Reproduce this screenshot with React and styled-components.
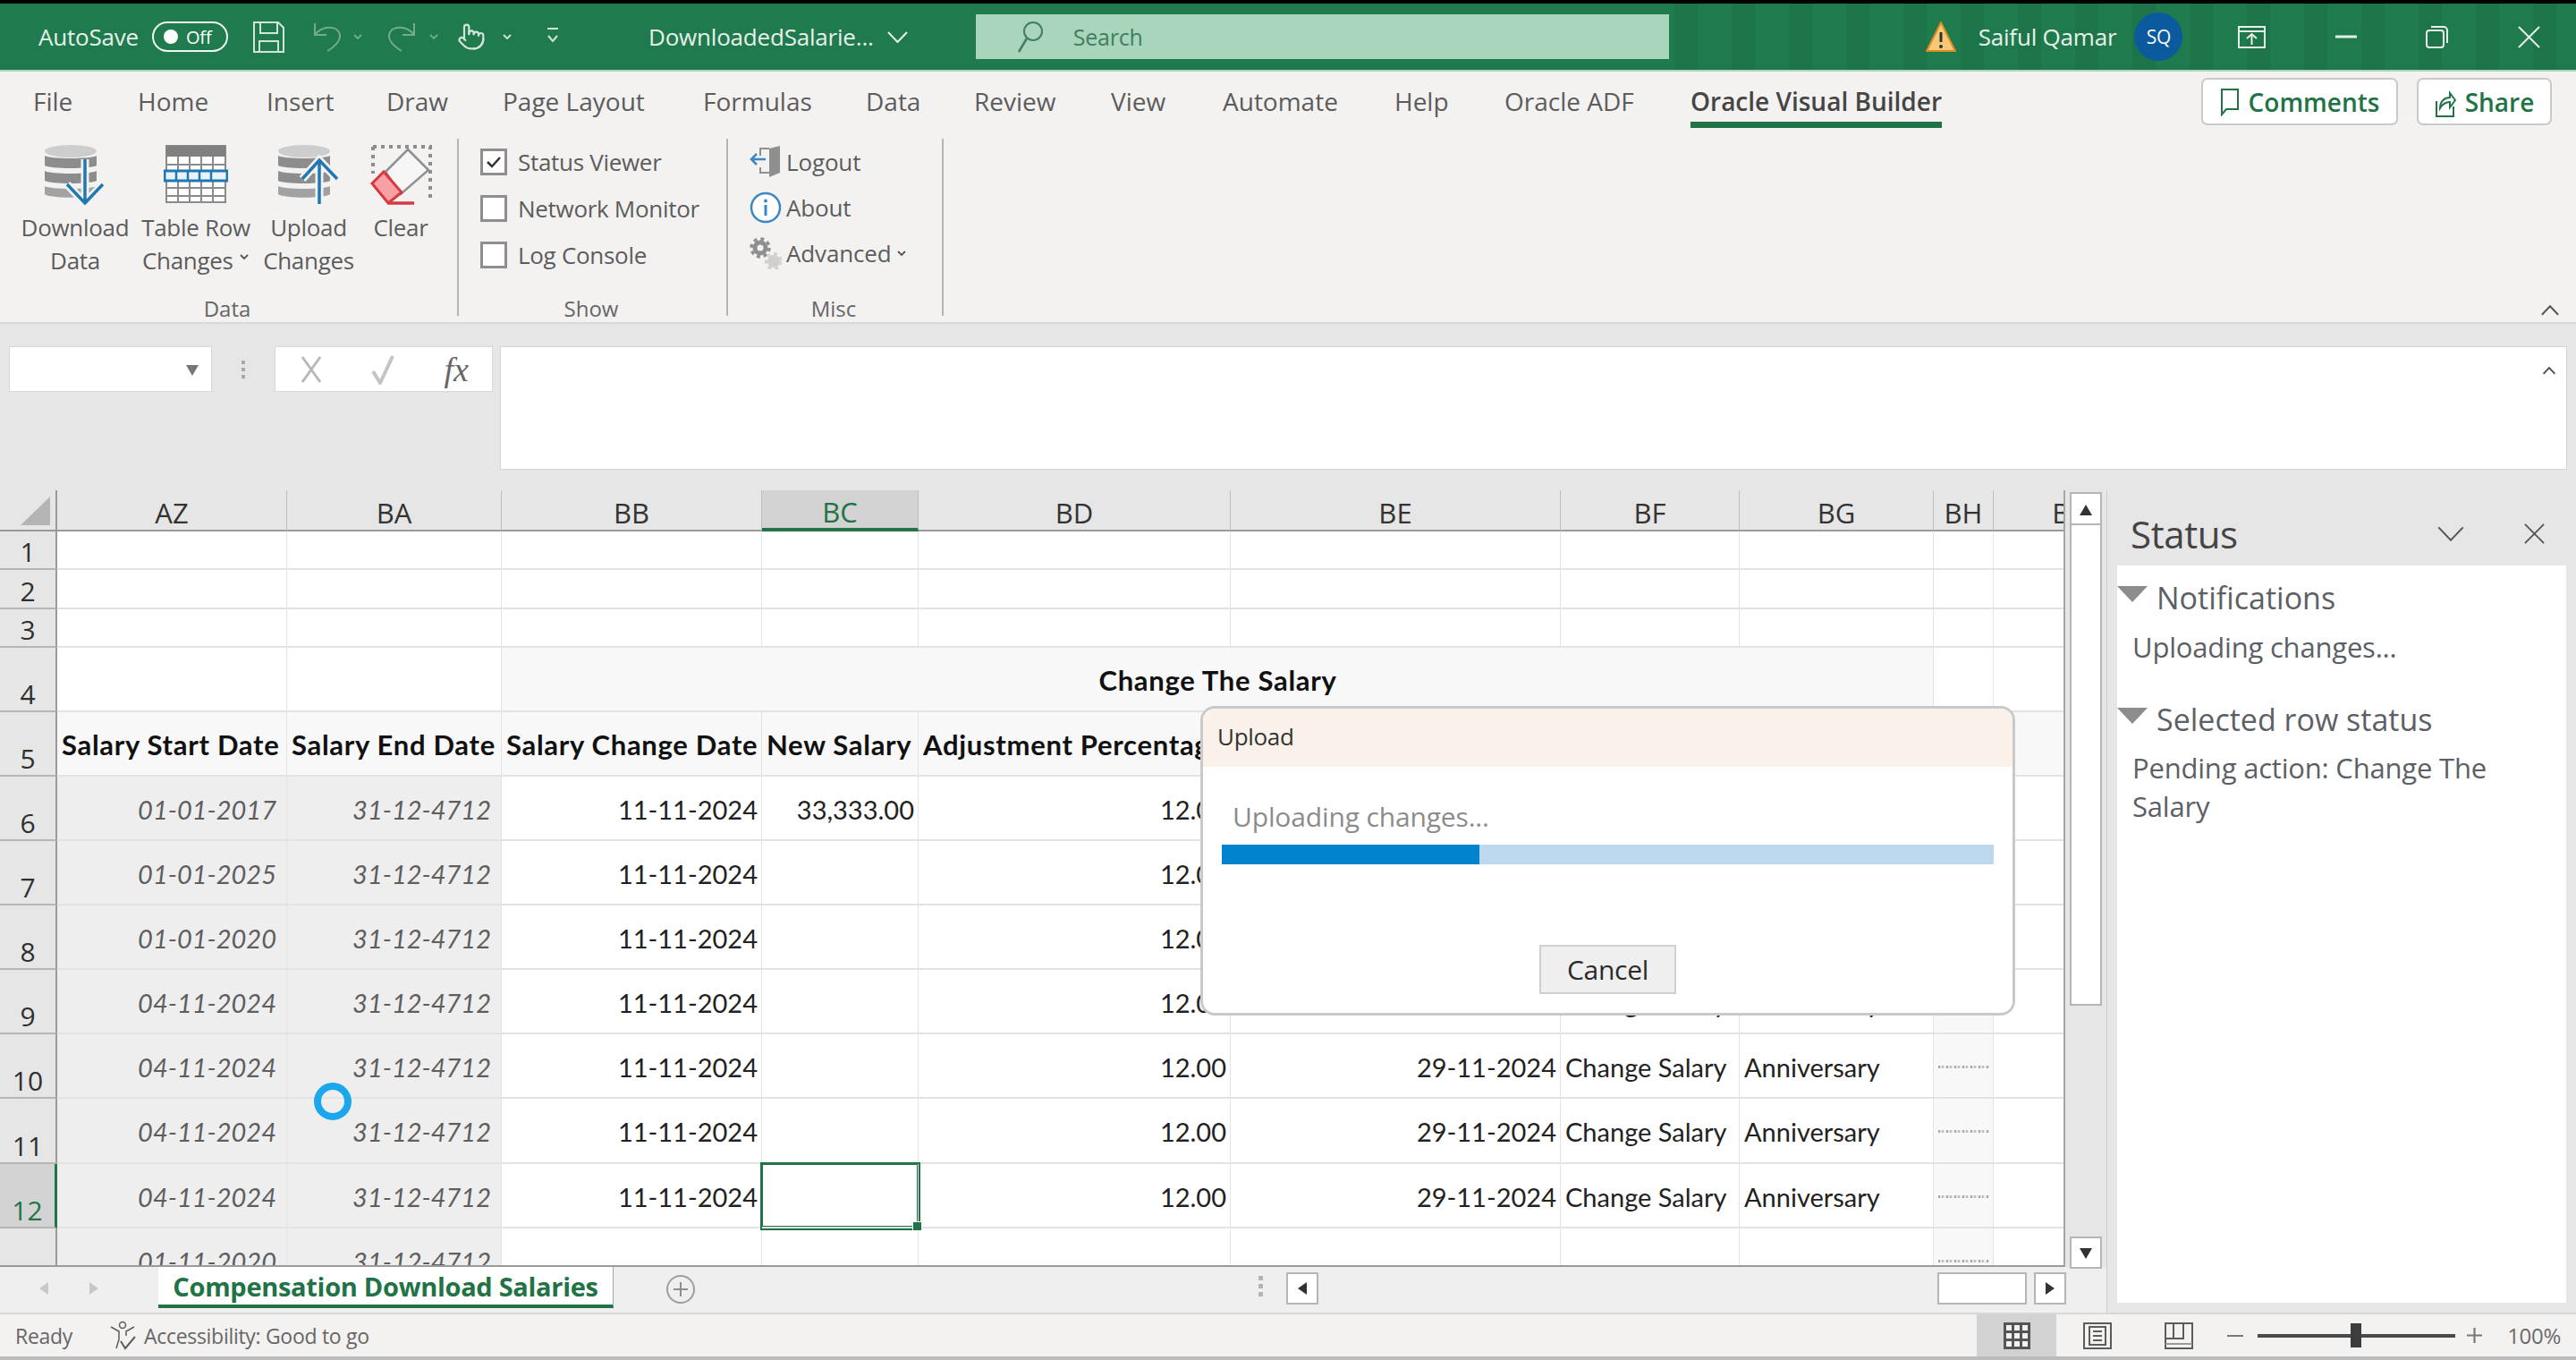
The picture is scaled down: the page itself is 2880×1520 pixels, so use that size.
import React from "react";
import styled, { createGlobalStyle } from "styled-components";
import { Pointer } from "lucide-react";

const GlobalStyle = createGlobalStyle`
  html, body {
    margin: 0;
    padding: 0;
    background: #000;
  }
  * {
    box-sizing: border-box;
  }
`;

const UI_FONT = `"Open Sans", "Noto Sans", sans-serif`;
const CELL_FONT = `Lato, "Open Sans", sans-serif`;
const GREEN = "#217346";

const Page = styled.div`
  width: 2880px;
  height: 1520px;
  display: flex;
  flex-direction: column;
  overflow: hidden;
  border-top: 4px solid #000;
  background: #e6e6e6;
  font-family: ${UI_FONT};
`;

/* title bar */
const TitleBar = styled.header`
  height: 76px;
  flex: none;
  display: flex;
  align-items: center;
  padding-left: 43px;
  color: #e6f1ea;
  font-size: 26px;
  letter-spacing: -0.2px;
  border-bottom: 2px solid #a9d6bc;
  background:
    repeating-linear-gradient(90deg, rgba(0, 0, 0, 0.05) 0 26px, transparent 26px 64px) right / 1008px 100% no-repeat,
    #1f7a4d;
`;

const Slot = styled.span`
  display: inline-flex;
  align-items: center;
  flex: none;
  margin-left: ${(p) => p.$gap || 0}px;
  white-space: nowrap;
`;

const Toggle = styled.span`
  width: 85px;
  height: 34px;
  margin-left: 15px;
  flex: none;
  display: flex;
  align-items: center;
  gap: 9px;
  padding-left: 11px;
  border: 2px solid #eef6f1;
  border-radius: 17px;
  font-size: 20px;
  color: #fff;
  &::before {
    content: "";
    width: 16px;
    height: 16px;
    border-radius: 50%;
    background: #fff;
  }
`;

const SearchBox = styled.div`
  width: 775px;
  height: 50px;
  margin-left: 76px;
  flex: none;
  display: flex;
  align-items: center;
  gap: 33px;
  padding-left: 46px;
  background: #a8d5bb;
  color: #3f7f5f;
  font-size: 25px;
`;

const Avatar = styled.span`
  width: 54px;
  height: 54px;
  margin-left: 20px;
  flex: none;
  display: flex;
  align-items: center;
  justify-content: center;
  border-radius: 50%;
  background: #0b5a9e;
  color: #fff;
  font-size: 21px;
`;

/* ribbon */
const Ribbon = styled.section`
  height: 282px;
  flex: none;
  display: flex;
  flex-direction: column;
  background: #f3f2f1;
  border-bottom: 2px solid #dad9d8;
  color: #5c5c5c;
`;

const TabRow = styled.nav`
  height: 66px;
  flex: none;
  display: flex;
  align-items: flex-start;
  padding: 0 27px 0 37px;
`;

const MenuTab = styled.span`
  width: ${(p) => (p.$width ? `${p.$width}px` : "auto")};
  height: 63px;
  flex: none;
  display: flex;
  align-items: center;
  padding-top: 10px;
  font-size: 28px;
  font-weight: ${(p) => (p.$active ? 600 : 400)};
  color: ${(p) => (p.$active ? "#454545" : "#5c5c5c")};
  border-bottom: ${(p) => (p.$active ? `7px solid ${GREEN}` : "7px solid transparent")};
`;

const TabActions = styled.div`
  margin-left: auto;
  margin-top: 7px;
  display: flex;
  gap: 21px;
`;

const ActionButton = styled.button`
  width: ${(p) => p.$width}px;
  height: 53px;
  display: flex;
  align-items: center;
  justify-content: center;
  gap: 10px;
  padding: 0;
  border: 2px solid #c9c9c9;
  border-radius: 7px;
  background: #fff;
  color: ${GREEN};
  font-family: inherit;
  font-size: 28px;
  font-weight: 600;
`;

const Tools = styled.div`
  height: 198px;
  margin-top: 9px;
  flex: none;
  display: flex;
`;

const Group = styled.div`
  width: ${(p) => p.$width}px;
  height: 100%;
  flex: none;
  display: flex;
  flex-direction: column;
  border-right: 2px solid #b5b5b5;
  padding-left: ${(p) => p.$pad || 0}px;
`;

const GroupLabel = styled.div`
  margin-top: auto;
  margin-left: ${(p) => -(p.$pad || 0)}px;
  padding-right: 3px;
  height: 16px;
  line-height: 16px;
  text-align: center;
  font-size: 24px;
  color: #666;
`;

const BigButtons = styled.div`
  display: grid;
  grid-template-columns: 124px 146px 106px 100px;
`;

const BigButton = styled.div`
  display: flex;
  flex-direction: column;
  align-items: center;
  padding-top: 7px;
  font-size: 26px;
  line-height: 37px;
  letter-spacing: -0.3px;
  white-space: nowrap;
  text-align: center;
  svg {
    margin-bottom: 8px;
    flex: none;
  }
`;

const IconWrap = styled.div`
  height: 74px;
`;

const CheckRow = styled.div`
  height: 52px;
  display: flex;
  align-items: center;
  gap: 12px;
  font-size: 26px;
  letter-spacing: -0.3px;
  white-space: nowrap;
`;

const CheckBox = styled.span`
  width: 30px;
  height: 30px;
  flex: none;
  display: flex;
  align-items: center;
  justify-content: center;
  background: #fff;
  border: 3px solid #8e8e8e;
`;

const MiscRow = styled.div`
  height: 51px;
  display: flex;
  align-items: center;
  gap: 5px;
  font-size: 26px;
  letter-spacing: -0.15px;
  white-space: nowrap;
`;

const Collapse = styled.span`
  margin: auto 19px 0 auto;
  display: flex;
`;

/* formula bar */
const FormulaBar = styled.section`
  height: 186px;
  flex: none;
  display: flex;
  align-items: flex-start;
  padding: 25px 10px 0 10px;
  background: #e6e6e6;
`;

const NameBox = styled.div`
  width: 227px;
  height: 51px;
  flex: none;
  display: flex;
  align-items: center;
  justify-content: flex-end;
  padding-right: 14px;
  background: #fff;
  border: 1px solid #d8d8d8;
`;

const Grip = styled.span`
  width: 70px;
  height: 51px;
  flex: none;
  display: flex;
  flex-direction: column;
  align-items: center;
  justify-content: center;
  gap: 4px;
  i {
    width: 4px;
    height: 4px;
    background: #a8a8a8;
  }
`;

const FxBox = styled.div`
  width: 244px;
  height: 51px;
  flex: none;
  display: flex;
  align-items: center;
  justify-content: space-between;
  padding: 0 26px 0 28px;
  background: #fff;
  border: 1px solid #d8d8d8;
`;

const FxMark = styled.span`
  font-family: "Liberation Serif", serif;
  font-style: italic;
  font-size: 38px;
  color: #666;
`;

const FormulaInput = styled.div`
  flex: 1;
  height: 138px;
  margin-left: 8px;
  display: flex;
  justify-content: flex-end;
  padding: 22px 12px 0 0;
  background: #fff;
  border: 1px solid #d4d4d4;
  align-items: flex-start;
`;

/* workspace */
const Workspace = styled.main`
  height: 919px;
  flex: none;
  display: flex;
`;

const SheetColumn = styled.div`
  width: 2356px;
  flex: none;
  display: flex;
  flex-direction: column;
  border-right: 1px solid #cfcfcf;
`;

const SheetBody = styled.div`
  position: relative;
  height: 868px;
  flex: none;
  display: flex;
`;

const GridClip = styled.div`
  width: 2309px;
  height: 868px;
  flex: none;
  overflow: hidden;
  border-bottom: 2px solid #9a9a9a;
  border-right: 2px solid #a5a5a5;
`;

const Grid = styled.div`
  width: 2389px;
  display: grid;
  grid-template-columns: 64px 257px 240px 291px 175px 349px 369px 200px 217px 67px 160px;
  grid-template-rows: 46px 43px 44px 43px 72px 72px 72px 72px 72px 72px 72px 73px 72px 72px;
  font-family: ${CELL_FONT};
`;

const Corner = styled.div`
  display: flex;
  align-items: flex-end;
  justify-content: flex-end;
  padding: 0 6px 5px 0;
  background: #e6e6e6;
  border-right: 2px solid #9a9a9a;
  border-bottom: 2px solid #9a9a9a;
  &::before {
    content: "";
    width: 33px;
    height: 32px;
    background: #b4b4b4;
    clip-path: polygon(100% 0, 100% 100%, 0 100%);
  }
`;

const ColHead = styled.div`
  display: flex;
  align-items: center;
  justify-content: center;
  padding-top: 6px;
  font-family: ${UI_FONT};
  font-size: 31px;
  color: ${(p) => (p.$active ? GREEN : "#333")};
  background: ${(p) => (p.$active ? "#d3d3d3" : "#e6e6e6")};
  border-right: 1px solid #bdbdbd;
  border-bottom: ${(p) => (p.$active ? `4px solid ${GREEN}` : "2px solid #9a9a9a")};
`;

const RowHead = styled.div`
  display: flex;
  align-items: flex-end;
  justify-content: center;
  padding-bottom: 1px;
  font-family: ${UI_FONT};
  font-size: 30px;
  line-height: 34px;
  color: ${(p) => (p.$active ? GREEN : "#2f2f2f")};
  background: ${(p) => (p.$active ? "#d3d3d3" : "#e6e6e6")};
  border-bottom: 2px solid #b5b5b5;
  border-right: ${(p) => (p.$active ? `3px solid ${GREEN}` : "2px solid #9a9a9a")};
`;

const toneColors = { plain: "#fff", soft: "#f8f8f8", muted: "#eeeeee" };

const Cell = styled.div`
  position: relative;
  display: flex;
  align-items: center;
  justify-content: ${(p) => p.$justify || "flex-end"};
  padding: 2px ${(p) => (p.$muted ? 11 : 4)}px 0 5px;
  font-size: ${(p) => (p.$bold ? "31px" : "29px")};
  letter-spacing: ${(p) => (p.$bold ? "0.7px" : "0")};
  font-weight: ${(p) => (p.$bold ? 700 : 400)};
  font-style: ${(p) => (p.$muted ? "italic" : "normal")};
  color: ${(p) => (p.$muted ? "#5e5e5e" : p.$bold ? "#111" : "#222")};
  white-space: nowrap;
  background: ${(p) => toneColors[p.$tone || "plain"]};
  border-right: 1px solid #e3e3e3;
  border-bottom: 2px solid #e3e3e3;
  ${(p) => p.$span && `grid-column: span ${p.$span};`}
  ${(p) =>
    p.$selected &&
    `
    box-shadow: 0 0 0 2px ${GREEN}, inset 0 0 0 1px ${GREEN};
    z-index: 1;
    &::after {
      content: "";
      position: absolute;
      right: -5px;
      bottom: -5px;
      width: 9px;
      height: 9px;
      background: ${GREEN};
      border: 1px solid #fff;
    }
  `}
`;

const TinyMark = styled.span`
  width: 60px;
  height: 3px;
  background: repeating-linear-gradient(90deg, #a8a8a8 0 2px, #e6e6e6 2px 4px, #bdbdbd 4px 6px, #ececec 6px 9px);
`;

const VScroll = styled.div`
  width: 46px;
  flex: none;
  display: flex;
  flex-direction: column;
  padding: 2px 5px 0;
  margin-bottom: -2px;
`;

const ScrollBtn = styled.div`
  width: ${(p) => p.$w || 36}px;
  height: ${(p) => p.$h || 36}px;
  flex: none;
  display: flex;
  align-items: center;
  justify-content: center;
  background: #fff;
  border: 2px solid #b5b5b5;
  ${(p) => p.$push && "margin-top: auto;"}
`;

const VThumb = styled.div`
  width: 36px;
  height: 537px;
  flex: none;
  background: #fff;
  border: 2px solid #b5b5b5;
  border-top: none;
`;

const Spinner = styled.div`
  position: absolute;
  left: 351px;
  top: 662px;
  width: 42px;
  height: 42px;
  border: 8px solid #1aa7ee;
  border-radius: 50%;
  z-index: 4;
`;

const Dialog = styled.div`
  position: absolute;
  left: 1342px;
  top: 241px;
  width: 911px;
  height: 346px;
  display: flex;
  flex-direction: column;
  background: #fff;
  border: 3px solid #c9c9c9;
  border-radius: 16px;
  overflow: hidden;
  z-index: 3;
`;

const DialogTitle = styled.div`
  height: 65px;
  flex: none;
  display: flex;
  align-items: center;
  padding: 0 0 3px 16px;
  background: #faf2ea;
  font-size: 26px;
  letter-spacing: -0.3px;
  color: #333;
`;

const DialogBody = styled.div`
  flex: 1;
  display: flex;
  flex-direction: column;
  padding: 35px 21px 21px;
`;

const DialogText = styled.div`
  padding-left: 12px;
  font-size: 30px;
  line-height: 42px;
  letter-spacing: -0.15px;
  color: #8b8b8b;
`;

const Progress = styled.div`
  height: 22px;
  margin-top: 10px;
  flex: none;
  background: #bbd8ef;
`;

const ProgressFill = styled.div`
  width: 33.4%;
  height: 100%;
  background: #0082cc;
`;

const CancelButton = styled.button`
  width: 153px;
  height: 55px;
  margin: auto auto 0;
  padding: 0;
  background: #efefef;
  border: 2px solid #d0d0d0;
  font-family: inherit;
  font-size: 30px;
  letter-spacing: -0.3px;
  color: #2a2a2a;
`;

/* sheet tabs */
const SheetTabs = styled.div`
  height: 51px;
  flex: none;
  display: flex;
  align-items: flex-start;
  background: #efefef;
`;

const NavArrows = styled.div`
  width: 177px;
  height: 48px;
  flex: none;
  display: flex;
  align-items: center;
  gap: 42px;
  padding-left: 42px;
`;

const SheetTab = styled.div`
  width: 509px;
  height: 46px;
  flex: none;
  display: flex;
  align-items: center;
  justify-content: center;
  background: #fff;
  border-bottom: 4px solid ${GREEN};
  border-right: 1px solid #a5a5a5;
  color: ${GREEN};
  font-size: 29px;
  font-weight: 700;
  letter-spacing: -0.3px;
`;

const AddSheet = styled.span`
  width: 32px;
  height: 32px;
  margin: 9px 0 0 59px;
  flex: none;
  display: flex;
  align-items: center;
  justify-content: center;
  border: 2px solid #9d9d9d;
  border-radius: 50%;
`;

const DotGrip = styled.span`
  margin: 9px 0 0 630px;
  flex: none;
  width: 5px;
  display: flex;
  flex-direction: column;
  gap: 4px;
  padding-top: 1px;
  i {
    height: 5px;
    background: #b4b4b4;
  }
`;

const HScroll = styled.div`
  margin: 6px 0 0 26px;
  display: flex;
  flex: none;
  width: 875px;
`;

const HThumb = styled.div`
  width: 100px;
  height: 36px;
  margin-left: 692px;
  flex: none;
  background: #fff;
  border: 2px solid #b5b5b5;
  margin-right: 8px;
`;

/* status pane */
const StatusPane = styled.aside`
  flex: 1;
  display: flex;
  flex-direction: column;
  padding: 0 11px 11px 11px;
`;

const PaneHeader = styled.div`
  height: 84px;
  flex: none;
  display: flex;
  align-items: center;
  padding: 12px 24px 0 15px;
  font-size: 42px;
  letter-spacing: -0.4px;
  color: #444;
  svg:first-of-type {
    margin-left: auto;
    margin-right: 67px;
  }
`;

const PaneBody = styled.div`
  flex: 1;
  padding: 16px 16px 0 0;
  background: #fff;
  color: #5c6066;
`;

const SectionTitle = styled.div`
  height: 40px;
  display: flex;
  align-items: center;
  gap: 10px;
  margin-top: ${(p) => p.$gap || 0}px;
  font-size: 34px;
  white-space: nowrap;
  &::before {
    content: "";
    width: 34px;
    height: 18px;
    margin-top: -8px;
    background: #8c8c8c;
    clip-path: polygon(0 0, 100% 0, 50% 100%);
  }
`;

const SectionText = styled.div`
  margin-top: ${(p) => p.$gap || 0}px;
  padding-left: 17px;
  font-size: 31px;
  line-height: 43px;
  font-weight: 500;
  letter-spacing: -0.2px;
`;

/* status bar */
const StatusBar = styled.footer`
  height: 53px;
  flex: none;
  display: flex;
  align-items: flex-start;
  padding-left: 17px;
  background: #f3f2f1;
  border-top: 2px solid #d8d8d8;
  border-bottom: 4px solid #bcbcbc;
  color: #666;
  font-size: 23px;
  letter-spacing: -0.3px;
`;

const StatusText = styled.span`
  height: 47px;
  display: flex;
  align-items: center;
  gap: 8px;
  margin-left: ${(p) => p.$gap || 0}px;
  white-space: nowrap;
`;

const ViewButton = styled.span`
  width: ${(p) => p.$w}px;
  height: 47px;
  flex: none;
  display: flex;
  align-items: center;
  justify-content: center;
  margin-left: ${(p) => (p.$auto ? "auto" : `${p.$gap || 0}px`)};
  background: ${(p) => (p.$active ? "#d2d2d2" : "transparent")};
`;

const ZoomSlider = styled.div`
  width: 221px;
  height: 47px;
  margin: 0 13px 0 16px;
  flex: none;
  display: flex;
  align-items: center;
  background: linear-gradient(#4a4a4a, #4a4a4a) center / 100% 4px no-repeat;
  &::before {
    content: "";
    width: 12px;
    height: 27px;
    margin-left: 104px;
    background: #3c3c3c;
  }
`;

const ZoomValue = styled.span`
  height: 47px;
  margin: 0 17px 0 28px;
  display: flex;
  align-items: center;
  font-size: 24px;
  color: #6a6a6a;
`;

/* drawings */
const Db = () => (
  <>
    <ellipse cx="29" cy="7" rx="29" ry="7" fill="#cdcdcd" />
    <path d="M0 12c6 4 52 4 58 0v11c-6 4-52 4-58 0z" fill="#8d8d8d" />
    <path d="M0 29c6 4 52 4 58 0v11c-6 4-52 4-58 0z" fill="#8d8d8d" />
    <path d="M0 46c6 4 52 4 58 0v9c-6 5-52 5-58 0z" fill="#a2a2a2" />
  </>
);

const DownloadIcon = () => (
  <svg width="68" height="68" viewBox="0 0 68 68">
    <Db />
    <path d="M45 16v48M25 44l20 21 20-21" fill="none" stroke="#f3f2f1" strokeWidth="9" />
    <path d="M45 16v48M25 44l20 21 20-21" fill="none" stroke="#1f78b4" strokeWidth="3.5" />
  </svg>
);

const UploadIcon = () => (
  <svg width="68" height="68" viewBox="0 0 68 68">
    <Db />
    <path d="M46 66V17M27 38l19-21 20 21" fill="none" stroke="#f3f2f1" strokeWidth="9" />
    <path d="M46 66V17M27 38l19-21 20 21" fill="none" stroke="#1f78b4" strokeWidth="3.5" />
  </svg>
);

const TableIcon = () => (
  <svg width="72" height="66" viewBox="0 0 72 66">
    <rect x="3" y="1" width="66" height="63" fill="#fff" stroke="#8b8b8b" strokeWidth="2" />
    <rect x="3" y="1" width="66" height="12" fill="#808080" />
    <path d="M3 22h66M3 48h66M3 57h66M16 13v51M29 13v51M42 13v51M55 13v51" stroke="#8b8b8b" strokeWidth="2" />
    <rect x="1" y="29" width="70" height="11" fill="#eaf3fa" stroke="#1f78b4" strokeWidth="3" />
    <path d="M14 29v11M27 29v11M40 29v11M53 29v11" stroke="#1f78b4" strokeWidth="2.5" />
  </svg>
);

const EraserIcon = () => (
  <svg width="70" height="68" viewBox="0 0 70 68">
    <path d="M4 2h64v62M4 2v30" fill="none" stroke="#8d8d8d" strokeWidth="4" strokeDasharray="4 5" />
    <path d="M43 5l23 23-31 27-17-25z" fill="#f6f6f6" stroke="#909090" strokeWidth="2.5" />
    <path d="M16 30l20 23-15 12L3 43z" fill="#f8a0a4" stroke="#d8383f" strokeWidth="3" />
    <path d="M21 65h29" stroke="#d8383f" strokeWidth="3.5" />
  </svg>
);

const CheckMark = () => (
  <svg width="18" height="16" viewBox="0 0 18 16">
    <path d="M2 8l5 5 9-10" fill="none" stroke="#333" strokeWidth="2.5" />
  </svg>
);

const LogoutIcon = () => (
  <svg width="36" height="36" viewBox="0 0 36 36">
    <path d="M22 3l12-3v30l-12 5z" fill="#8f8f8f" />
    <path d="M12 11V3h10M12 24v6h10" fill="none" stroke="#8f8f8f" strokeWidth="2" />
    <path d="M2 15h16M8 9l-6 6 6 6" fill="none" stroke="#3b87c4" strokeWidth="2.5" />
  </svg>
);

const InfoIcon = () => (
  <svg width="36" height="36" viewBox="0 0 36 36">
    <circle cx="18" cy="18" r="16" fill="#fff" stroke="#3b87c4" strokeWidth="2.5" />
    <circle cx="18" cy="10.5" r="2" fill="#3b87c4" />
    <path d="M18 15v12" stroke="#3b87c4" strokeWidth="3" />
  </svg>
);

const GearsIcon = () => (
  <svg width="36" height="36" viewBox="0 0 36 36">
    <circle cx="12" cy="12" r="6" fill="none" stroke="#8f8f8f" strokeWidth="5" />
    <circle cx="12" cy="12" r="10" fill="none" stroke="#8f8f8f" strokeWidth="3.5" strokeDasharray="4 3.85" />
    <circle cx="27" cy="27" r="7" fill="#cfcfcf" />
    <circle cx="27" cy="27" r="8.5" fill="none" stroke="#cfcfcf" strokeWidth="3" strokeDasharray="4 4" />
  </svg>
);

const Caret = ({ color = "#555", size = 12 }) => (
  <svg width={size} height={size} viewBox="0 0 12 12">
    <path d="M2 4l4 4 4-4" fill="none" stroke={color} strokeWidth="1.8" />
  </svg>
);

const SaveIcon = () => (
  <svg width="35" height="35" viewBox="0 0 35 35">
    <path d="M1 1h27l6 6v27H1z" fill="none" stroke="#d3e5da" strokeWidth="2" />
    <path d="M8 1v12h19V1M7 34V22h21v12" fill="none" stroke="#d3e5da" strokeWidth="2" />
  </svg>
);

const UndoIcon = ({ flip }) => (
  <svg width="32" height="34" viewBox="0 0 32 34" transform={flip ? "scale(-1 1)" : undefined}>
    <path d="M2 2v13h13M2 15C10 4 28 4 30 15c1 7-7 14-14 18" fill="none" stroke="#74ab8e" strokeWidth="2" />
  </svg>
);

const CustomizeIcon = () => (
  <svg width="14" height="22" viewBox="0 0 14 22">
    <path d="M1 2h12M2 10l5 6 5-6" fill="none" stroke="#d3e5da" strokeWidth="2" />
  </svg>
);

const SearchIcon = () => (
  <svg width="30" height="36" viewBox="0 0 30 36">
    <circle cx="18" cy="12" r="10" fill="none" stroke="#3f7f5f" strokeWidth="2" />
    <path d="M11 20L2 35" stroke="#3f7f5f" strokeWidth="2.5" />
  </svg>
);

const WarnIcon = () => (
  <svg width="34" height="35" viewBox="0 0 34 35">
    <path d="M17 1l16 32H1z" fill="#f7c977" stroke="#d98a24" strokeWidth="2" />
    <path d="M17 12v11" stroke="#333" strokeWidth="3" />
    <circle cx="17" cy="28" r="2" fill="#333" />
  </svg>
);

const RibbonDisplayIcon = () => (
  <svg width="31" height="25" viewBox="0 0 31 25">
    <rect x="1" y="1" width="29" height="23" fill="none" stroke="#e6f1ea" strokeWidth="2" />
    <path d="M1 6h29M15.500 21V10M10 14l5.500-5 5.500 5" fill="none" stroke="#e6f1ea" strokeWidth="2" />
  </svg>
);

const MinimizeIcon = () => (
  <svg width="24" height="4" viewBox="0 0 24 4">
    <path d="M0 2h24" stroke="#e6f1ea" strokeWidth="3" />
  </svg>
);

const RestoreIcon = () => (
  <svg width="25" height="25" viewBox="0 0 25 25">
    <rect x="1" y="5" width="19" height="19" rx="3" fill="none" stroke="#e6f1ea" strokeWidth="2" />
    <path d="M6 1h14a4 4 0 0 1 4 4v14" fill="none" stroke="#e6f1ea" strokeWidth="2" />
  </svg>
);

const CloseIcon = ({ size = 25, color = "#e6f1ea", weight = 2 }) => (
  <svg width={size} height={size} viewBox="0 0 25 25">
    <path d="M1 1l23 23M24 1L1 24" stroke={color} strokeWidth={weight} />
  </svg>
);

const ChevronIcon = ({ width = 23, height = 13, color = "#e6f1ea", weight = 2, up }) => (
  <svg width={width} height={height} viewBox="0 0 23 13">
    <path d={up ? "M1 12L11.500 1 22 12" : "M1 1l10.500 11L22 1"} fill="none" stroke={color} strokeWidth={weight} vectorEffect="non-scaling-stroke" />
  </svg>
);

const CommentIcon = () => (
  <svg width="22" height="32" viewBox="0 0 22 32">
    <path d="M2 2h18v22H7l-5 6z" fill="none" stroke={GREEN} strokeWidth="2" />
  </svg>
);

const ShareIcon = () => (
  <svg width="24" height="34" viewBox="0 0 24 34">
    <path d="M2 16v17h19V22" fill="none" stroke={GREEN} strokeWidth="2" />
    <path d="M6 24c0-8 5-12 11-12V7l6 8-6 8v-6c-5 0-8 2-11 7z" fill="none" stroke={GREEN} strokeWidth="2" />
  </svg>
);

const CrossMark = () => (
  <svg width="24" height="34" viewBox="0 0 24 34">
    <path d="M2 3l20 28M22 3L2 31" stroke="#b8b8b8" strokeWidth="3" />
  </svg>
);

const TickMark = () => (
  <svg width="28" height="34" viewBox="0 0 28 34">
    <path d="M3 19l8 13L25 2" fill="none" stroke="#c4c4c4" strokeWidth="4" />
  </svg>
);

const Tri = ({ dir, color = "#333", w = 14, h = 14 }) => {
  const points = {
    up: "0,14 14,14 7,2",
    down: "0,2 14,2 7,14",
    left: "12,0 12,14 2,7",
    right: "2,0 2,14 12,7",
  };
  return (
    <svg width={w} height={h} viewBox="0 0 14 14">
      <polygon points={points[dir]} fill={color} />
    </svg>
  );
};

const PlusIcon = ({ size = 16, color = "#8d8d8d" }) => (
  <svg width={size} height={size} viewBox="0 0 16 16">
    <path d="M8 0v16M0 8h16" stroke={color} strokeWidth="2" />
  </svg>
);

const MinusIcon = () => (
  <svg width="18" height="4" viewBox="0 0 18 4">
    <path d="M0 2h18" stroke="#777" strokeWidth="2" />
  </svg>
);

const AccessIcon = () => (
  <svg width="31" height="33" viewBox="0 0 31 33">
    <circle cx="15" cy="5" r="3.500" fill="none" stroke="#5c5c5c" strokeWidth="1.500" />
    <path d="M2 7l9 5v9l-3 10M28 7l-9 5v5" fill="none" stroke="#5c5c5c" strokeWidth="1.500" />
    <path d="M13 23l5 8 11-13" fill="none" stroke="#5c5c5c" strokeWidth="2" />
  </svg>
);

const NormalViewIcon = () => (
  <svg width="30" height="30" viewBox="0 0 30 30">
    <rect x="1.500" y="1.500" width="27" height="27" fill="#f3f2f1" stroke="#555" strokeWidth="3" />
    <path d="M10.500 1v28M19.500 1v28M1 10.500h28M1 19.500h28" stroke="#555" strokeWidth="3" />
  </svg>
);

const PageViewIcon = () => (
  <svg width="32" height="30" viewBox="0 0 32 30">
    <rect x="1" y="1" width="30" height="28" fill="none" stroke="#5c5c5c" strokeWidth="2" />
    <rect x="7" y="5" width="18" height="20" fill="none" stroke="#5c5c5c" strokeWidth="2" />
    <path d="M11 10h10M11 15h10M11 20h10" stroke="#5c5c5c" strokeWidth="2" />
  </svg>
);

const BreakViewIcon = () => (
  <svg width="32" height="30" viewBox="0 0 32 30">
    <rect x="1" y="1" width="30" height="28" fill="none" stroke="#5c5c5c" strokeWidth="2" />
    <path d="M1 18h20V1M10 1v17" fill="none" stroke="#5c5c5c" strokeWidth="2" />
    <path d="M1 24h30" stroke="#9a9a9a" strokeWidth="2" />
  </svg>
);

/* data */
const columns = ["AZ", "BA", "BB", "BC", "BD", "BE", "BF", "BG", "BH", "BI"];

const startDates = [
  "01-01-2017",
  "01-01-2025",
  "01-01-2020",
  "04-11-2024",
  "04-11-2024",
  "04-11-2024",
  "04-11-2024",
];

const headers = ["Salary Start Date", "Salary End Date", "Salary Change Date", "New Salary", "Adjustment Percentage"];

const menu = [
  ["File", 117],
  ["Home", 144],
  ["Insert", 134],
  ["Draw", 130],
  ["Page Layout", 224],
  ["Formulas", 182],
  ["Data", 121],
  ["Review", 153],
  ["View", 125],
  ["Automate", 192],
  ["Help", 123],
  ["Oracle ADF", 208],
];

const BlankCells = ({ count }) =>
  Array.from({ length: count }, (_, i) => <Cell key={i} />);

const DataRow = ({ number, start, index }) => {
  const active = number === 12;
  return (
    <>
      <RowHead $active={active}>{number}</RowHead>
      <Cell $tone="muted" $muted>{start}</Cell>
      <Cell $tone="muted" $muted>31-12-4712</Cell>
      <Cell>11-11-2024</Cell>
      <Cell $selected={active}>{index === 0 ? "33,333.00" : ""}</Cell>
      <Cell>12.00</Cell>
      <Cell>29-11-2024</Cell>
      <Cell $justify="flex-start">Change Salary</Cell>
      <Cell $justify="flex-start">Anniversary</Cell>
      <Cell $tone="soft" $justify="flex-start"><TinyMark /></Cell>
      <Cell />
    </>
  );
};

const SheetGrid = () => (
  <GridClip>
    <Grid>
      <Corner />
      {columns.map((c) => (
        <ColHead key={c} $active={c === "BC"}>{c}</ColHead>
      ))}
      {[1, 2, 3].map((n) => (
        <React.Fragment key={n}>
          <RowHead>{n}</RowHead>
          <BlankCells count={10} />
        </React.Fragment>
      ))}
      <RowHead>4</RowHead>
      <BlankCells count={2} />
      <Cell $tone="soft" $span={6} $bold $justify="center">Change The Salary</Cell>
      <BlankCells count={2} />
      <RowHead>5</RowHead>
      {headers.map((h) => (
        <Cell key={h} $tone="soft" $bold $justify="flex-start">{h}</Cell>
      ))}
      {Array.from({ length: 5 }, (_, i) => (
        <Cell key={i} $tone="soft" />
      ))}
      {startDates.map((start, i) => (
        <DataRow key={i} number={i + 6} start={start} index={i} />
      ))}
      <RowHead>13</RowHead>
      <Cell $tone="muted" $muted>01-11-2020</Cell>
      <Cell $tone="muted" $muted>31-12-4712</Cell>
      <BlankCells count={6} />
      <Cell $tone="soft" $justify="flex-start"><TinyMark /></Cell>
      <Cell />
    </Grid>
  </GridClip>
);

const TitleBarContent = () => (
  <TitleBar>
    <Slot>AutoSave</Slot>
    <Toggle>Off</Toggle>
    <Slot $gap={28}><SaveIcon /></Slot>
    <Slot $gap={32}><UndoIcon /></Slot>
    <Slot $gap={12}><Caret color="#74ab8e" /></Slot>
    <Slot $gap={27}><UndoIcon flip /></Slot>
    <Slot $gap={14}><Caret color="#74ab8e" /></Slot>
    <Slot $gap={20}><Pointer size={32} color="#d3e5da" strokeWidth={1.6} /></Slot>
    <Slot $gap={18}><Caret color="#d3e5da" /></Slot>
    <Slot $gap={38}><CustomizeIcon /></Slot>
    <Slot $gap={100}>DownloadedSalarie...</Slot>
    <Slot $gap={15}><ChevronIcon /></Slot>
    <SearchBox>
      <SearchIcon />
      Search
    </SearchBox>
    <Slot $gap={287}><WarnIcon /></Slot>
    <Slot $gap={25}>Saiful Qamar</Slot>
    <Avatar>SQ</Avatar>
    <Slot $gap={62}><RibbonDisplayIcon /></Slot>
    <Slot $gap={78}><MinimizeIcon /></Slot>
    <Slot $gap={77}><RestoreIcon /></Slot>
    <Slot $gap={78}><CloseIcon /></Slot>
  </TitleBar>
);

const RibbonContent = () => (
  <Ribbon>
    <TabRow>
      {menu.map(([label, width]) => (
        <MenuTab key={label} $width={width}>{label}</MenuTab>
      ))}
      <MenuTab $active>Oracle Visual Builder</MenuTab>
      <TabActions>
        <ActionButton $width={220}><CommentIcon />Comments</ActionButton>
        <ActionButton $width={151}><ShareIcon />Share</ActionButton>
      </TabActions>
    </TabRow>
    <Tools>
      <Group $width={513} $pad={22}>
        <BigButtons>
          <BigButton><IconWrap><DownloadIcon /></IconWrap>Download<br />Data</BigButton>
          <BigButton><IconWrap><TableIcon /></IconWrap>Table Row<span>Changes <Caret /></span></BigButton>
          <BigButton><IconWrap><UploadIcon /></IconWrap>Upload<br />Changes</BigButton>
          <BigButton><IconWrap><EraserIcon /></IconWrap>Clear</BigButton>
        </BigButtons>
        <GroupLabel $pad={22}>Data</GroupLabel>
      </Group>
      <Group $width={301} $pad={24}>
        <CheckRow><CheckBox><CheckMark /></CheckBox>Status Viewer</CheckRow>
        <CheckRow><CheckBox />Network Monitor</CheckRow>
        <CheckRow><CheckBox />Log Console</CheckRow>
        <GroupLabel $pad={24}>Show</GroupLabel>
      </Group>
      <Group $width={241} $pad={24}>
        <MiscRow><LogoutIcon />Logout</MiscRow>
        <MiscRow><InfoIcon />About</MiscRow>
        <MiscRow><GearsIcon />Advanced <Caret /></MiscRow>
        <GroupLabel $pad={24}>Misc</GroupLabel>
      </Group>
      <Collapse><ChevronIcon up width={20} height={12} color="#555" /></Collapse>
    </Tools>
  </Ribbon>
);

const FormulaContent = () => (
  <FormulaBar>
    <NameBox><Tri dir="down" color="#777" /></NameBox>
    <Grip><i /><i /><i /></Grip>
    <FxBox>
      <CrossMark />
      <TickMark />
      <FxMark>fx</FxMark>
    </FxBox>
    <FormulaInput><ChevronIcon up width={14} height={9} color="#555" /></FormulaInput>
  </FormulaBar>
);

const UploadDialog = () => (
  <Dialog>
    <DialogTitle>Upload</DialogTitle>
    <DialogBody>
      <DialogText>Uploading changes...</DialogText>
      <Progress><ProgressFill /></Progress>
      <CancelButton>Cancel</CancelButton>
    </DialogBody>
  </Dialog>
);

const SheetArea = () => (
  <SheetColumn>
    <SheetBody>
      <SheetGrid />
      <VScroll>
        <ScrollBtn $h={37}><Tri dir="up" /></ScrollBtn>
        <VThumb />
        <ScrollBtn $push><Tri dir="down" /></ScrollBtn>
      </VScroll>
      <UploadDialog />
      <Spinner />
    </SheetBody>
    <SheetTabs>
      <NavArrows>
        <Tri dir="left" color="#c8c8c8" />
        <Tri dir="right" color="#c8c8c8" />
      </NavArrows>
      <SheetTab>Compensation Download Salaries</SheetTab>
      <AddSheet><PlusIcon /></AddSheet>
      <DotGrip><i /><i /><i /></DotGrip>
      <HScroll>
        <ScrollBtn><Tri dir="left" color="#333" /></ScrollBtn>
        <HThumb />
        <ScrollBtn><Tri dir="right" color="#333" /></ScrollBtn>
      </HScroll>
    </SheetTabs>
  </SheetColumn>
);

const StatusPanel = () => (
  <StatusPane>
    <PaneHeader>
      Status
      <ChevronIcon width={30} height={17} color="#555" />
      <CloseIcon size={23} color="#555" />
    </PaneHeader>
    <PaneBody>
      <SectionTitle>Notifications</SectionTitle>
      <SectionText $gap={14}>Uploading changes...</SectionText>
      <SectionTitle $gap={39}>Selected row status</SectionTitle>
      <SectionText $gap={13}>Pending action: Change The Salary</SectionText>
    </PaneBody>
  </StatusPane>
);

const BottomBar = () => (
  <StatusBar>
    <StatusText>Ready</StatusText>
    <StatusText $gap={41}><AccessIcon />Accessibility: Good to go</StatusText>
    <ViewButton $auto $active $w={89}><NormalViewIcon /></ViewButton>
    <ViewButton $w={91}><PageViewIcon /></ViewButton>
    <ViewButton $w={91}><BreakViewIcon /></ViewButton>
    <ViewButton $gap={9} $w={18}><MinusIcon /></ViewButton>
    <ZoomSlider />
    <ViewButton $w={17}><PlusIcon size={17} color="#777" /></ViewButton>
    <ZoomValue>100%</ZoomValue>
  </StatusBar>
);

export default function App() {
  return (
    <Page>
      <GlobalStyle />
      <TitleBarContent />
      <RibbonContent />
      <FormulaContent />
      <Workspace>
        <SheetArea />
        <StatusPanel />
      </Workspace>
      <BottomBar />
    </Page>
  );
}
